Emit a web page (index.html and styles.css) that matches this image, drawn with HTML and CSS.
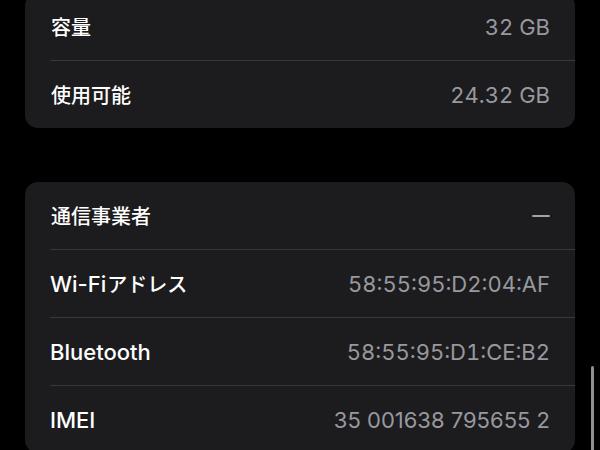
FILE: index.html
```html
<!DOCTYPE html>
<html lang="ja">

<head>
    <meta charset="UTF-8">
    <meta name="viewport" content="width=device-width, initial-scale=1.0">
    <title>情報</title>
    <link rel="stylesheet" href="styles.css">
</head>

<body>
    <div id="main">
        <div class="group first">
            <div class="row">
                <span class="label"><span class="ja">容量</span></span>
                <span class="value">32 GB</span>
            </div>
            <div class="row">
                <span class="label"><span class="ja">使用可能</span></span>
                <span class="value">24.32 GB</span>
            </div>
        </div>

        <div class="group">
            <div class="row">
                <span class="label"><span class="ja">通信事業者</span></span>
                <span class="dash"></span>
            </div>
            <div class="row">
                <span class="label">Wi-Fi<span class="ja">アドレス</span></span>
                <span class="value">58:55:95:D2:04:AF</span>
            </div>
            <div class="row">
                <span class="label">Bluetooth</span>
                <span class="value">58:55:95:D1:CE:B2</span>
            </div>
            <div class="row">
                <span class="label">IMEI</span>
                <span class="value imei">35 001638 795655 2</span>
            </div>
        </div>
    </div>
    <div class="scrollbar"></div>
</body>

</html>
```

FILE: styles.css
```css
html,
body {
    margin: 0;
    height: 100%;
    overflow: hidden;
    background-color: #000;
}

body {
    font-family: Inter, "Noto Sans CJK JP", sans-serif;
    font-size: 22px;
    -webkit-font-smoothing: antialiased;
}

#main {
    padding: 0 25px;
}

.group {
    background-color: #1c1c1e;
    border-radius: 13px;
    margin-top: 54px;
    overflow: hidden;
}

.group.first {
    margin-top: -7px;
}

.row {
    height: 67px;
    margin-left: 25px;
    padding-right: 25px;
    display: flex;
    align-items: center;
    justify-content: space-between;
    border-top: 1px solid #38383a;
}

.row:first-child {
    border-top: none;
}

.label {
    color: #fff;
    font-weight: 500;
}

.ja {
    font-family: "Noto Sans CJK JP", sans-serif;
    font-size: 20px;
    margin-left: 1px;
}

.value {
    color: #98989f;
    font-variant-numeric: tabular-nums;
}

.imei {
    font-variant-numeric: normal;
}

.dash {
    width: 18px;
    height: 2px;
    border-radius: 1px;
    background-color: #a1a1a6;
}

.scrollbar {
    position: fixed;
    right: 6px;
    top: 366px;
    width: 3px;
    height: 100px;
    border-radius: 2px;
    background-color: #8e8e93;
}
```
